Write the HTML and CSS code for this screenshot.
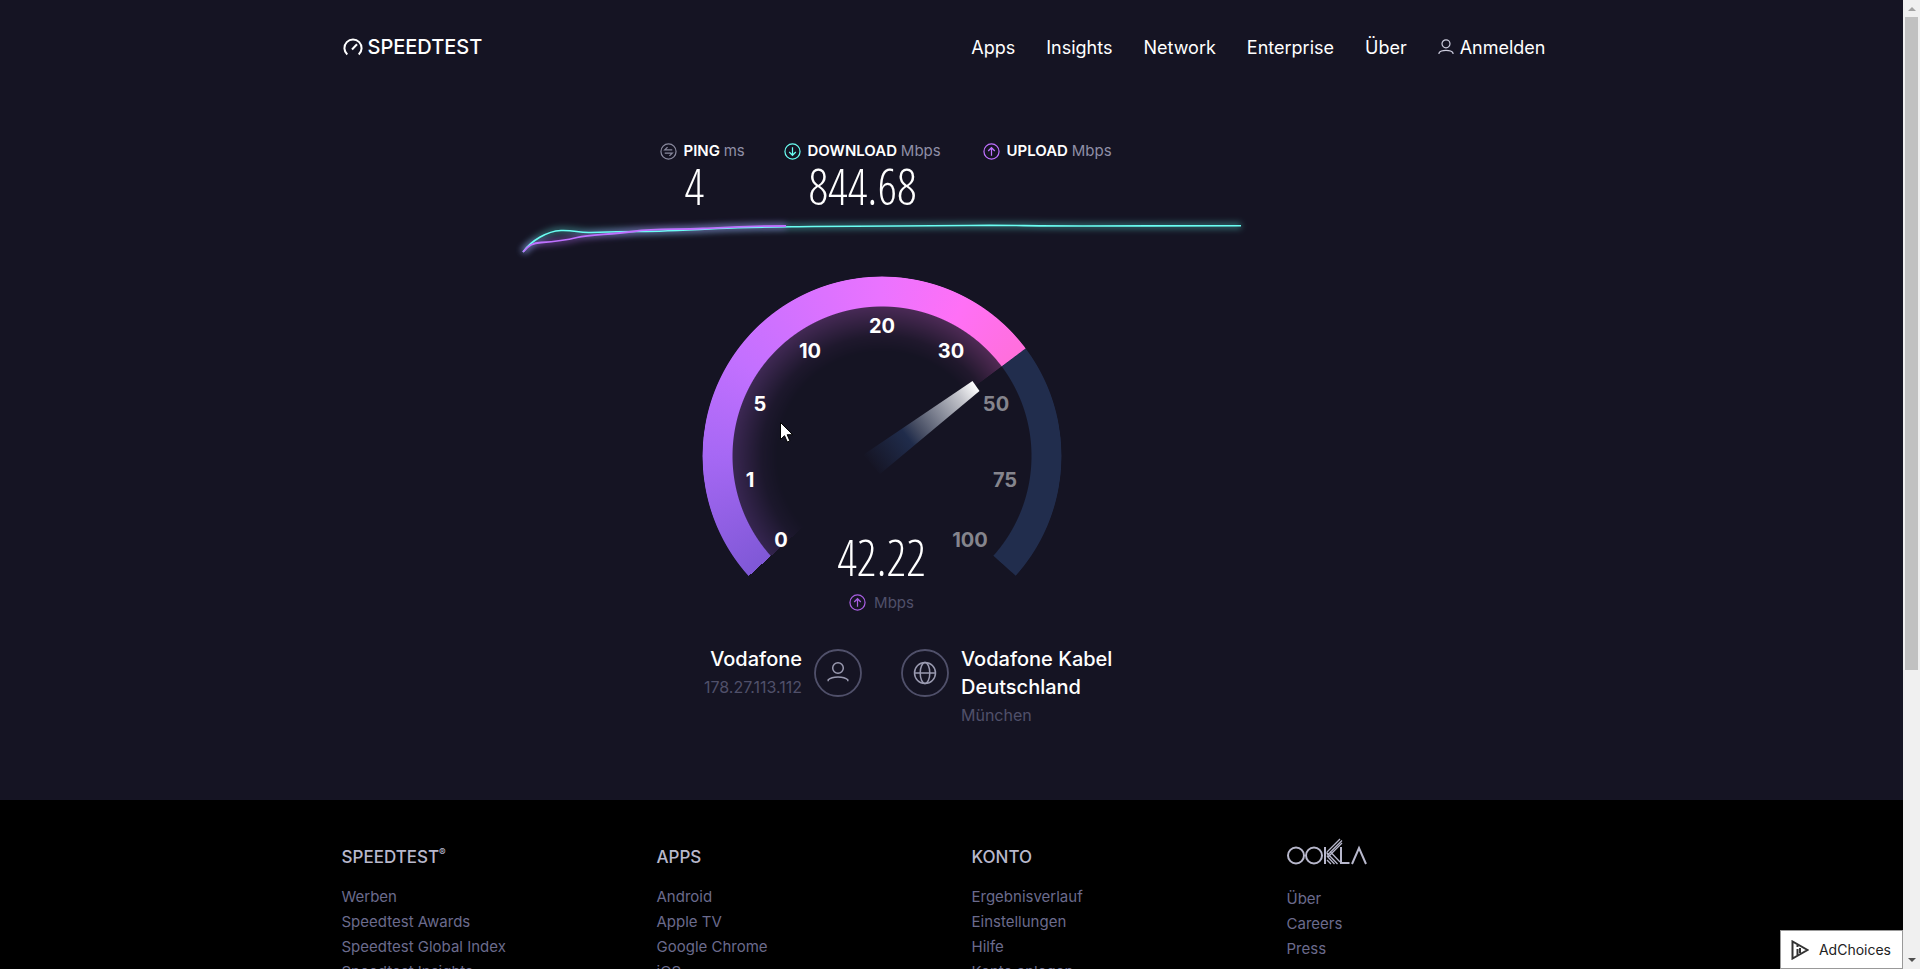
FILE: index.html
```html
<!DOCTYPE html>
<html lang="de">
<head>
<meta charset="utf-8">
<title>Speedtest</title>
<link rel="stylesheet" href="styles.css">
</head>
<body>
<div class="page">
  <header class="header container">
    <a class="logo" href="#">
      <svg width="20" height="18" viewBox="0 0 20 18" fill="none" stroke="#fff" stroke-width="2"><path d="M4.300 16.500A8.600 8.600 0 1 1 15.700 16.500"/><path d="M9 11.500l5-5.300"/></svg>
      <span>SPEEDTEST</span>
    </a>
    <nav class="nav">
      <a href="#">Apps</a><a href="#">Insights</a><a href="#">Network</a><a href="#">Enterprise</a><a href="#">Über</a>
      <a class="login" href="#"><svg width="16" height="16" viewBox="0 0 16 16" fill="none" stroke="#ccd" stroke-width="1.200"><circle cx="8" cy="4.800" r="4"/><path d="M1 15v-1c2-3.400 12-3.400 14 0v1"/></svg>Anmelden</a>
    </nav>
  </header>
  <main class="container stage">
    <div class="stats">
      <div class="stat">
        <svg class="icon" viewBox="0 0 18 18" fill="none" stroke="#8a8a9f" stroke-width="1.300"><circle cx="9" cy="9" r="8"/><path d="M13 7.300H5l3-3M5 10.700h8l-3 3"/></svg>
        <h2>PING <span>ms</span></h2><p class="value">4</p>
      </div>
      <div class="stat">
        <svg class="icon" viewBox="0 0 18 18" fill="none" stroke="#6afff3" stroke-width="1.300"><circle cx="9" cy="9" r="8"/><path d="M9 4.500v8.500M5.500 9.500L9 13l3.500-3.500"/></svg>
        <h2>DOWNLOAD <span>Mbps</span></h2><p class="value">844.68</p>
      </div>
      <div class="stat">
        <svg class="icon" viewBox="0 0 18 18" fill="none" stroke="#bf71ff" stroke-width="1.300"><circle cx="9" cy="9" r="8"/><path d="M9 13.500V5M5.500 8.500L9 5l3.500 3.500"/></svg>
        <h2>UPLOAD <span>Mbps</span></h2>
      </div>
    </div>
    <svg class="chart" viewBox="0 0 718 46" fill="none">
      <defs><filter id="glow" x="-5%" y="-50%" width="110%" height="200%"><feGaussianBlur stdDeviation="3"/></filter></defs>
      <path class="halo" filter="url(#glow)" d="M0 36C8 25 24 15 38 14.500S55 17 68 16.500 100 15.500 118 15.500 165 14 195 12.500 250 11 290 10.500 400 10 445 9.500 500 10 560 10 650 9.700 718 9.700" stroke="#5fe8e0"/>
      <path class="halo" filter="url(#glow)" d="M0 36C6 29 10 27 18 26.500S40 25 54 21.500 85 19 110 15.500 150 14 180 12.500 225 10 263 10" stroke="#bf71ff"/>
      <path d="M0 36C8 25 24 15 38 14.500S55 17 68 16.500 100 15.500 118 15.500 165 14 195 12.500 250 11 290 10.500 400 10 445 9.500 500 10 560 10 650 9.700 718 9.700" stroke="#6afff3" stroke-width="1.600"/>
      <path d="M0 36C6 29 10 27 18 26.500S40 25 54 21.500 85 19 110 15.500 150 14 180 12.500 225 10 263 10" stroke="#bf71ff" stroke-width="1.800"/>
    </svg>
    <section class="gauge">
      <div class="glow"></div><div class="arc"></div>
      <svg class="dial" viewBox="0 0 360 300">
        <defs><linearGradient id="needle" gradientUnits="userSpaceOnUse" x1="168" y1="189" x2="274" y2="109"><stop offset="0" stop-color="#202e50" stop-opacity="0"/><stop offset=".35" stop-color="#202c4b"/><stop offset=".45" stop-color="#444b61"/><stop offset=".85" stop-color="#c4c5cc"/><stop offset="1" stop-color="#fff"/></linearGradient></defs>
        <path d="M270.500 105l7 10L178 198 161 179z" fill="url(#needle)"/>
        <g class="ticks"><text x="79" y="271">0</text><text x="48" y="211">1</text><text x="58" y="135">5</text><text x="108" y="82">10</text><text x="180" y="57">20</text><text x="249" y="82">30</text><g class="off"><text x="294" y="135">50</text><text x="303" y="211">75</text><text x="268" y="271">100</text></g></g>
        <path d="M78.500 146.500v17l4-3.800 2.800 6.300 2.600-1.100-2.700-6.200h5.500z" fill="#fff" stroke="#000" stroke-width="1"/>
      </svg>
      <p class="value speed">42.22</p>
    </section>
    <p class="unit"><svg class="icon" viewBox="0 0 18 18" fill="none" stroke="#a95fe3" stroke-width="1.300"><circle cx="9" cy="9" r="8"/><path d="M9 13.500V5M5.500 8.500L9 5l3.500 3.500"/></svg>Mbps</p>
    <section class="hosts">
      <div class="host isp"><p class="name">Vodafone</p><p class="detail">178.27.113.112</p></div>
      <svg class="badge" viewBox="0 0 48 48" fill="none" stroke="#9a9ab0" stroke-width="1.500"><circle cx="24" cy="24" r="23" stroke="#50506a" stroke-width="1.800"/><circle cx="24" cy="19" r="5.300"/><path d="M14.200 32.300v-1.500c4-3.800 15.600-3.800 19.600 0v1.500"/></svg>
      <svg class="badge" viewBox="0 0 48 48" fill="none" stroke="#9a9ab0" stroke-width="1.500"><circle cx="24" cy="24" r="23" stroke="#50506a" stroke-width="1.800"/><circle cx="24" cy="24" r="10.500"/><ellipse cx="24" cy="24" rx="4.800" ry="10.500"/><path d="M13.500 24h21"/></svg>
      <div class="host"><p class="name">Vodafone Kabel Deutschland</p><p class="detail">München</p></div>
    </section>
  </main>
  <footer class="footer">
    <div class="container columns">
      <section><h3>SPEEDTEST<sup>®</sup></h3><a href="#">Werben</a><a href="#">Speedtest Awards</a><a href="#">Speedtest Global Index</a><a href="#">Speedtest Insights</a></section>
      <section><h3>APPS</h3><a href="#">Android</a><a href="#">Apple TV</a><a href="#">Google Chrome</a><a href="#">iOS</a></section>
      <section><h3>KONTO</h3><a href="#">Ergebnisverlauf</a><a href="#">Einstellungen</a><a href="#">Hilfe</a><a href="#">Konto anlegen</a></section>
      <section><svg class="ookla" role="img" aria-label="Ookla" viewBox="0 0 82 28" fill="none" stroke="#b8b8cc" stroke-width="2"><circle cx="9" cy="17.500" r="8"/><circle cx="27" cy="17.500" r="8"/><path d="M38 9v17M54 9v16h8.500M65 26l7-16 7 16"/><path stroke-width="1.300" d="M40 14L53 1M40 17.500L55 2.500M41 19L55 5M39.500 14.500L50.500 26M40 18L47.500 26M43 13.500L53 24M40 22l4 4"/></svg><a href="#">Über</a><a href="#">Careers</a><a href="#">Press</a></section>
    </div>
  </footer>
  <a class="adchoices" href="#"><svg width="18" height="20" viewBox="0 0 18 20" fill="none" stroke="#333" stroke-width="2"><path d="M1.500 1.500v17L16.500 10z"/><path d="M6.500 9v6M6.500 5v2M9 8v5"/></svg>AdChoices</a>
</div>
<div class="scrollbar"><i class="up"></i><div class="thumb"></div><i class="down"></i></div>
</body>
</html>
```
FILE: styles.css
```css
* { box-sizing: border-box; }
body { margin: 0; height: 100vh; display: flex; overflow: hidden; background: #151423; color: #fff; font-family: Inter, "Open Sans", sans-serif; }
h2, h3, p { margin: 0; }
a { color: inherit; text-decoration: none; }
svg { display: block; flex: none; }
.page { flex: 1; min-width: 0; height: 100vh; overflow: hidden; position: relative; }
.container { max-width: 1220px; margin: 0 auto; }
.header { display: flex; justify-content: space-between; align-items: center; height: 94px; padding-right: 16px; }
.logo { display: flex; align-items: center; gap: 5px; padding-left: 1px; font-size: 20px; font-weight: 500; }
.nav { display: flex; gap: 31px; font-size: 18px; }
.login { display: flex; align-items: center; gap: 6px; }
.stage { display: flex; flex-direction: column; align-items: center; min-height: 706px; padding: 46px 140px 0 0; }
.stats { display: grid; grid-template-columns: 124px 199px 133px; height: 80px; padding-left: 12px; }
.stat { display: grid; grid-template-columns: 17px max-content; grid-template-rows: 22px 48px; column-gap: 7px; align-items: center; }
.icon { width: 17px; height: 17px; }
.stat h2 { font-size: 15px; font-weight: 600; line-height: 22px; }
.stat h2 span { color: #8f8fa6; font-weight: 400; }
.value { font-family: "Noto Sans ExtraCondensed Thin", "Noto Sans ExtraCondensed Light", "Noto Sans ExtraCondensed", "Open Sans Condensed Light", "Roboto Condensed", Roboto, sans-serif; font-weight: 100; font-size: 49px; line-height: 48px; }
.stat .value { grid-column: 2; padding-left: 1px; }
.chart { width: 718px; height: 46px; margin-top: -4px; overflow: visible; }
.halo { stroke-width: 6px; opacity: .4; }
.gauge { width: 360px; height: 314px; margin-top: 14px; position: relative; }
.arc, .glow { position: absolute; width: 360px; height: 360px; top: 0; left: 0; border-radius: 50%; }
.arc { background: conic-gradient(from 228deg, #7f58d6 0deg, #a668f4 42deg, #c270ff 75deg, #ea73ff 132deg, #ff70f6 160deg, #ff6fdc 185deg, #212d4d 185.300deg, #212d4d 263.700deg, transparent 264deg); mask: radial-gradient(circle at center, transparent 149px, #000 150px, #000 179px, transparent 180px); }
.glow { background: conic-gradient(from 228deg, #7d4bb5 0deg, #a05ac8 75deg, #d060d0 150deg, #e060c8 185deg, transparent 185.300deg); opacity: .3; mask: radial-gradient(circle at center, transparent 104px, rgba(0,0,0,.2) 120px, #000 150px, transparent 151px); }
.dial { position: absolute; top: 0; left: 0; width: 360px; height: 300px; }
.ticks { font-size: 20px; font-weight: 700; fill: #fff; text-anchor: middle; }
.off { fill: #85858d; }
.speed { position: absolute; top: 257px; left: 0; right: 0; text-align: center; }
.unit { display: flex; align-items: center; gap: 8px; height: 24px; font-size: 15px; color: #50506a; }
.hosts { display: flex; gap: 12px; margin-top: 31px; }
.badge { width: 48px; height: 48px; margin-top: 4px; }
.badge + .badge { margin-left: 27px; }
.host { width: 160px; line-height: 28px; }
.isp { text-align: right; }
.name { font-size: 20px; font-weight: 500; }
.detail { font-size: 16px; color: #50506a; }
.footer { height: 300px; padding-top: 38px; background: #000; color: #6b6b8d; }
.columns { display: grid; grid-template-columns: repeat(4, 1fr); column-gap: 40px; }
.columns a { display: block; font-size: 15px; line-height: 25px; }
.columns h3 { height: 46px; padding-top: 8px; font-size: 17px; line-height: 22px; font-weight: 500; color: #b8b8cc; }
.columns sup { font-size: 10px; line-height: 0; }
.ookla { width: 82px; height: 28px; margin-bottom: 20px; }
.adchoices { position: absolute; right: 0; bottom: 0; display: flex; align-items: center; gap: 10px; height: 39px; padding: 0 11px 0 10px; background: #fff; border: 1px solid #999; color: #222; font-size: 14px; }
.scrollbar { width: 17px; background: #f0f0f0; display: flex; flex-direction: column; align-items: center; padding: 7px 2px; }
.thumb { width: 13px; height: 67.400vh; margin: 6px 0 auto; background: #c1c1c1; }
.up, .down { border: 4px solid transparent; }
.up { border-top: 0; border-bottom-color: #a3a3a3; }
.down { border-bottom: 0; border-top-color: #505050; }
```
